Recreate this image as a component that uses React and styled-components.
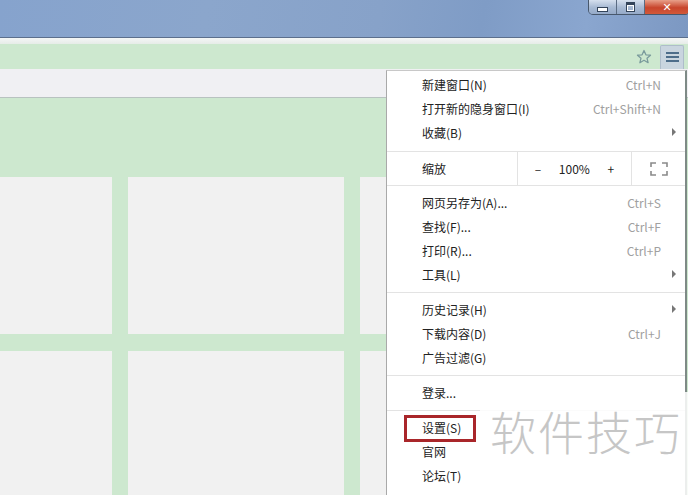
import styled, { createGlobalStyle } from "styled-components";

const GlobalStyle = createGlobalStyle`
  body {
    margin: 0;
    overflow: hidden;
    font-family: "Noto Sans CJK SC", "Noto Sans", sans-serif;
  }
`;

const Window = styled.div`
  position: relative;
  width: 688px;
  height: 495px;
  overflow: hidden;
  background: #cde8cf;
`;

const TitleBar = styled.div`
  height: 37px;
  display: flex;
  justify-content: flex-end;
  align-items: flex-start;
  background: linear-gradient(100deg, #86a3cd 0%, #8ba6cc 30%, #87a2c9 55%, #7f9cc6 70%, #8aa6cf 85%, #7c98c2 100%);
  border-bottom: 1px solid #5c6f8c;
`;

const WinButtons = styled.div`
  display: flex;
  height: 14px;
  border: 1px solid #48586c;
  border-top: none;
  border-radius: 0 0 5px 5px;
  overflow: hidden;
  margin-right: -2px;
`;

const WinButton = styled.div`
  width: ${(p) => p.$w}px;
  display: flex;
  justify-content: center;
  align-items: center;
  background: ${(p) =>
    p.$close
      ? "linear-gradient(#e8a08a, #c8452c 55%, #d2593a)"
      : "linear-gradient(#d6e0ee, #a9bbd4 50%, #95aac8)"};
  border-left: ${(p) => (p.$first ? "none" : "1px solid #5a6b82")};
  color: #fff;
  font: bold 11px "DejaVu Sans", sans-serif;
`;

const MinGlyph = styled.div`
  width: 9px;
  height: 3px;
  margin-top: 5px;
  background: #fff;
  border: 1px solid #33445a;
`;

const MaxGlyph = styled.div`
  width: 7px;
  height: 6px;
  border: 1px solid #33445a;
  border-top-width: 3px;
  background: transparent;
  box-shadow: inset 0 0 0 1px #fff;
`;

const Strip = styled.div`
  height: 6px;
  background: linear-gradient(#f4f6f6, #e6ece8);
`;

const Toolbar = styled.div`
  height: 25px;
  display: flex;
  justify-content: flex-end;
  align-items: center;
  gap: 8px;
  padding-right: 4px;
  background: #cde8cf;
`;

const MenuButton = styled.div`
  width: 24px;
  height: 24px;
  display: flex;
  justify-content: center;
  align-items: center;
  background: #c9d5df;
  border: 1px solid #aebdca;
  border-bottom: none;
  border-radius: 2px 2px 0 0;
  box-sizing: border-box;
`;

const BookmarkBar = styled.div`
  height: 28px;
  background: #f0f0f3;
  border-bottom: 1px solid #b8c2c0;
`;

const Tiles = styled.div`
  display: grid;
  grid-template-columns: 112px 216px 216px;
  grid-auto-rows: 157px;
  column-gap: 16px;
  row-gap: 17px;
  padding-top: 79px;
`;

const Tile = styled.div`
  background: #f1f1f1;
`;

const Menu = styled.div`
  position: absolute;
  top: 70px;
  left: 386px;
  width: 301px;
  height: 440px;
  box-sizing: border-box;
  padding-top: 1px;
  background: #fff;
  border-left: 1px solid #a9a9a9;
  border-top: 1px solid #c8c8c8;
  border-right: 2px solid #7e8a86;
  font-size: 12px;
  color: #222;
`;

const Item = styled.div`
  height: 24px;
  display: flex;
  align-items: center;
  padding: 0 24px 0 35px;
  position: relative;
`;

const Label = styled.span`
  flex: 1;
`;

const Shortcut = styled.span`
  color: #a0a0a0;
`;

const Arrow = styled.span`
  position: absolute;
  right: 9px;
  top: 8px;
  width: 0;
  height: 0;
  border-left: 4px solid #777;
  border-top: 4px solid transparent;
  border-bottom: 4px solid transparent;
`;

const Separator = styled.div`
  height: 1px;
  margin: 6px 0 4px;
  background: #e3e3e3;
`;

const ZoomRow = styled.div`
  display: grid;
  grid-template-columns: 130px 114px 1fr;
  height: 33px;
  margin: 7px 0 4px;
  border-top: 1px solid #e3e3e3;
  border-bottom: 1px solid #e3e3e3;
`;

const ZoomCell = styled.div`
  display: flex;
  align-items: center;
  justify-content: ${(p) => p.$justify || "center"};
  padding-left: ${(p) => p.$pad || 0}px;
  border-left: ${(p) => (p.$divider ? "1px solid #e3e3e3" : "none")};
`;

const ZoomControls = styled.div`
  display: flex;
  align-items: center;
  width: 100%;
  justify-content: space-around;
  padding: 0 8px;
  box-sizing: border-box;
`;

const Highlight = styled.div`
  position: absolute;
  left: 17px;
  top: 0px;
  width: 66px;
  height: 21px;
  border: 3px solid #a9262a;
`;

const Watermark = styled.div`
  position: absolute;
  left: 480px;
  top: 392px;
  width: 208px;
  height: 103px;
  padding: 11px 0 0 10px;
  box-sizing: border-box;
  background: rgba(255, 255, 255, 0.85);
  color: #c6c6c6;
  font-size: 46px;
  letter-spacing: 2px;
  font-weight: 300;
  line-height: 1.2;
  white-space: nowrap;
`;

const Star = () => (
  <svg width="16" height="16" viewBox="0 0 16 16">
    <path
      d="M8 1.5l1.9 4.3 4.6.4-3.5 3 1.1 4.5L8 11.3l-4.1 2.4 1.1-4.5-3.5-3 4.6-.4z"
      fill="none"
      stroke="#7a9b9c"
      strokeWidth="1.3"
      strokeLinejoin="round"
    />
  </svg>
);

const Hamburger = () => (
  <svg width="13" height="12" viewBox="0 0 13 12">
    <rect x="0" y="1" width="13" height="2" fill="#4d6d8a" />
    <rect x="0" y="5" width="13" height="2" fill="#4d6d8a" />
    <rect x="0" y="9" width="13" height="2" fill="#4d6d8a" />
  </svg>
);

const FullscreenIcon = () => (
  <svg width="18" height="14" viewBox="0 0 18 14">
    <path
      d="M1 5V1h5M12 1h5v4M17 9v4h-5M6 13H1V9"
      fill="none"
      stroke="#8a8a8a"
      strokeWidth="1.6"
    />
  </svg>
);

const groups = [
  [
    { label: "新建窗口(N)", key: "Ctrl+N" },
    { label: "打开新的隐身窗口(I)", key: "Ctrl+Shift+N" },
    { label: "收藏(B)", sub: true },
  ],
  "zoom",
  [
    { label: "网页另存为(A)...", key: "Ctrl+S" },
    { label: "查找(F)...", key: "Ctrl+F" },
    { label: "打印(R)...", key: "Ctrl+P" },
    { label: "工具(L)", sub: true },
  ],
  "sep",
  [
    { label: "历史记录(H)", sub: true },
    { label: "下载内容(D)", key: "Ctrl+J" },
    { label: "广告过滤(G)" },
  ],
  "sep",
  [{ label: "登录..." }],
  "sep",
  [{ label: "设置(S)", marked: true }, { label: "官网" }, { label: "论坛(T)" }],
];

export default function App() {
  return (
    <Window>
      <GlobalStyle />
      <TitleBar>
        <WinButtons>
          <WinButton $w={27} $first>
            <MinGlyph />
          </WinButton>
          <WinButton $w={27}>
            <MaxGlyph />
          </WinButton>
          <WinButton $w={44} $close>
            ✕
          </WinButton>
        </WinButtons>
      </TitleBar>
      <Strip />
      <Toolbar>
        <Star />
        <MenuButton>
          <Hamburger />
        </MenuButton>
      </Toolbar>
      <BookmarkBar />
      <Tiles>
        {Array.from({ length: 6 }).map((_, i) => (
          <Tile key={i} />
        ))}
      </Tiles>

      <Menu>
        {groups.map((g, gi) => {
          if (g === "sep") return <Separator key={gi} />;
          if (g === "zoom")
            return (
              <ZoomRow key={gi}>
                <ZoomCell $justify="flex-start" $pad={35}>
                  缩放
                </ZoomCell>
                <ZoomCell $divider>
                  <ZoomControls>
                    <span>–</span>
                    <span>100%</span>
                    <span>+</span>
                  </ZoomControls>
                </ZoomCell>
                <ZoomCell $divider>
                  <FullscreenIcon />
                </ZoomCell>
              </ZoomRow>
            );
          return g.map((it) => (
            <Item key={it.label}>
              {it.marked && <Highlight />}
              <Label>{it.label}</Label>
              {it.key && <Shortcut>{it.key}</Shortcut>}
              {it.sub && <Arrow />}
            </Item>
          ));
        })}
      </Menu>
      <Watermark>软件技巧</Watermark>
    </Window>
  );
}
